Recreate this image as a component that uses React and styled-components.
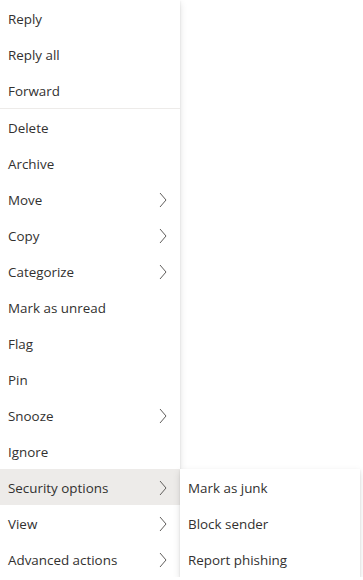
import { Fragment } from "react";
import styled, { createGlobalStyle } from "styled-components";

const Global = createGlobalStyle`
  html, body {
    margin: 0;
    padding: 0;
    background: #fff;
    overflow: hidden;
  }
  body {
    font-family: "Open Sans", "Noto Sans", sans-serif;
  }
`

const Menu = styled.ul`
  list-style: none;
  margin: 0;
  padding: 0;
  width: 180px;
  background: #fff;
  box-shadow: 0 3.2px 7.2px rgba(0,0,0,.13), 0 0.6px 1.8px rgba(0,0,0,.11);
  position: relative;
`
const Item = styled.li`
  position: relative;
  display: flex;
  align-items: center;
  justify-content: space-between;
  box-sizing: border-box;
  height: 36px;
  padding: 2px 13px 0 8px;
  font-size: 13.4px;
  color: #323130;
  background: ${p => (p.$active ? "#edebe9" : "transparent")};
  white-space: nowrap;
`
const Divider = styled.li`
  height: 1px;
  background: #edebe9;
`
const Chevron = styled.svg`
  width: 8px;
  height: 16px;
  flex: none;
`
const SubMenu = styled.ul`
  list-style: none;
  margin: 0;
  padding: 0;
  position: absolute;
  left: 100%;
  top: 0;
  width: 180px;
  background: #fff;
  box-shadow: 0 3.2px 7.2px rgba(0,0,0,.13), 0 0.6px 1.8px rgba(0,0,0,.11);
  z-index: 2;
`

function Arrow() {
  return (
    <Chevron viewBox="0 0 8 16" fill="none">
      <path d="M1 1L7 8L1 15" stroke="#605e5c" strokeWidth="1" />
    </Chevron>
  )
}

const groups = [
  [{ label: "Reply" }, { label: "Reply all" }, { label: "Forward" }],
  [
    { label: "Delete" },
    { label: "Archive" },
    { label: "Move", sub: true },
    { label: "Copy", sub: true },
    { label: "Categorize", sub: true },
    { label: "Mark as unread" },
    { label: "Flag" },
    { label: "Pin" },
    { label: "Snooze", sub: true },
    { label: "Ignore" },
    { label: "Security options", sub: true, open: true },
    { label: "View", sub: true },
    { label: "Advanced actions", sub: true },
  ],
]

const security = ["Mark as junk", "Block sender", "Report phishing"]

export default function App() {
  return (
    <>
      <Global />
      <Menu>
        {groups.map((g, gi) => (
          <Fragment key={gi}>
            {gi > 0 && <Divider />}
            {g.map(it => (
              <Item key={it.label} $active={it.open}>
                <span>{it.label}</span>
                {it.sub && <Arrow />}
                {it.open && (
                  <SubMenu>
                    {security.map(s => (
                      <Item key={s}>
                        <span>{s}</span>
                      </Item>
                    ))}
                  </SubMenu>
                )}
              </Item>
            ))}
          </Fragment>
        ))}
      </Menu>
    </>
  )
}
